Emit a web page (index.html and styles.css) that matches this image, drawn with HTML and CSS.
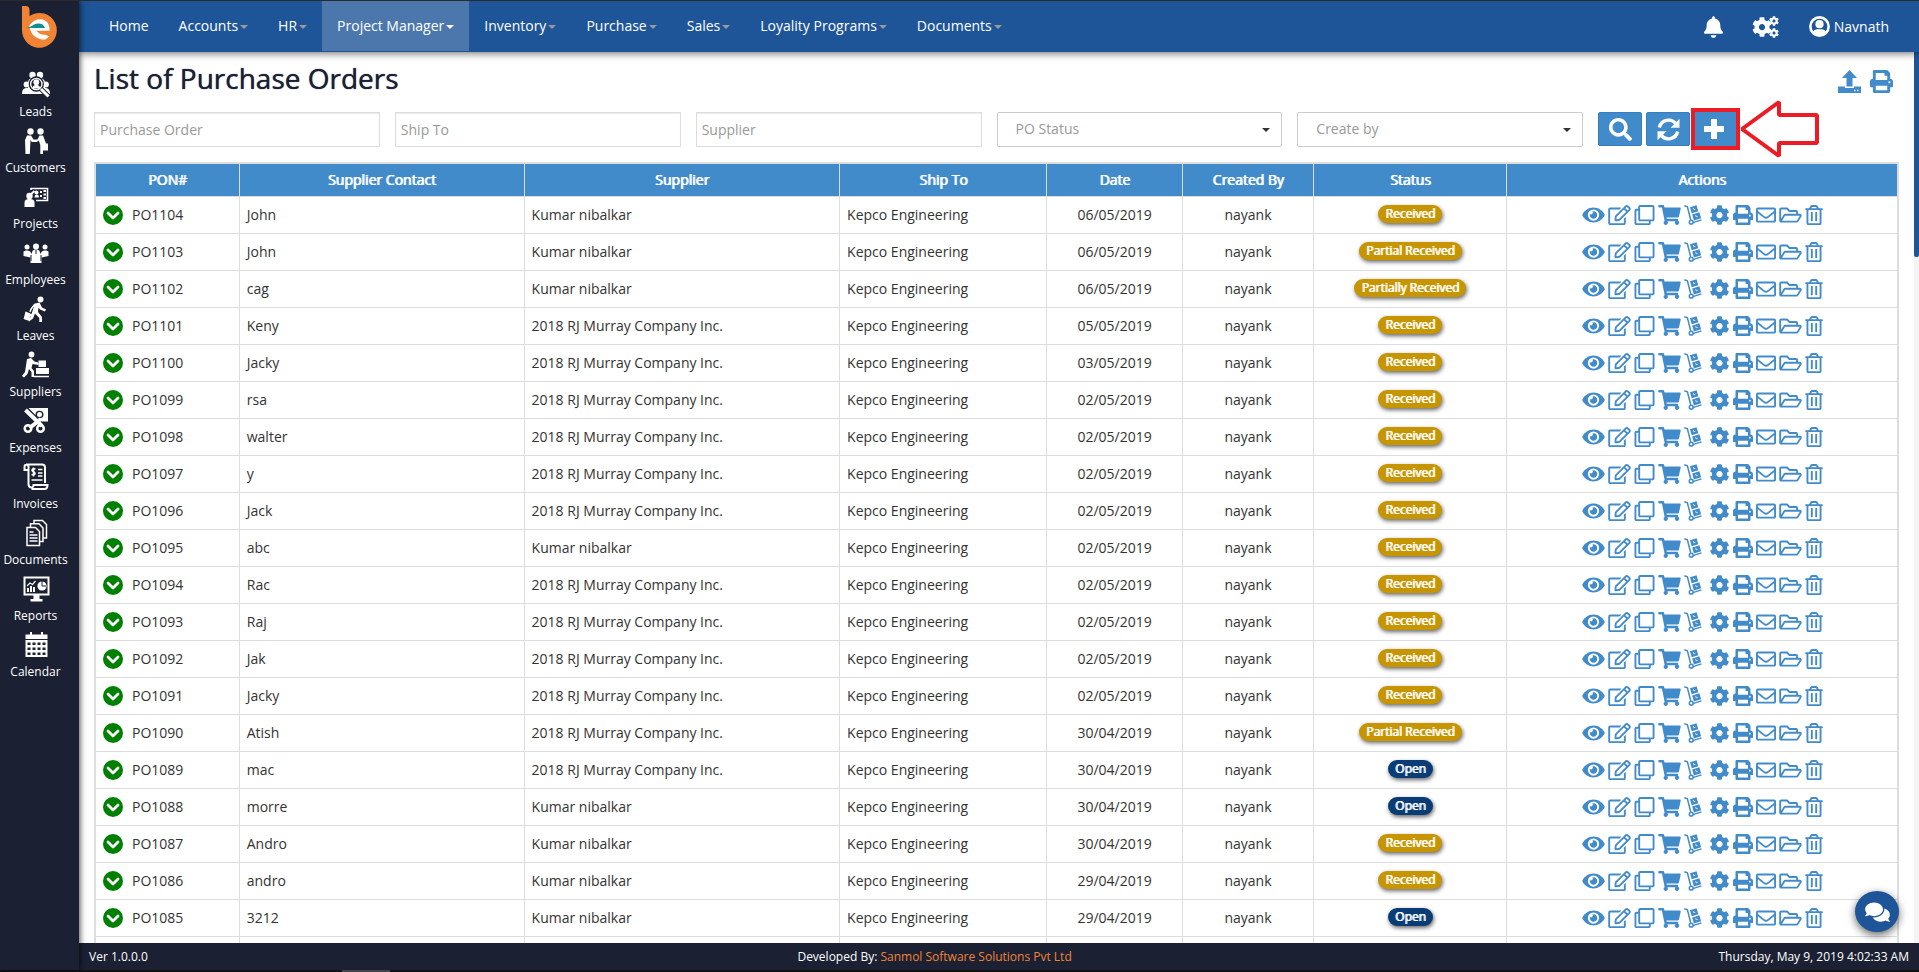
FILE: index.html
```html
<!DOCTYPE html>
<html lang="en">
<head>
<meta charset="utf-8">
<title>List of Purchase Orders</title>
<link rel="stylesheet" href="styles.css">
</head>
<body>
<svg class="sprite" aria-hidden="true">
  <symbol id="eye" viewBox="0 0 576 512"><path d="M572.52 241.4C518.29 135.59 410.93 64 288 64S57.68 135.64 3.48 241.41a32.35 32.35 0 0 0 0 29.19C57.71 376.41 165.07 448 288 448s230.32-71.64 284.52-177.41a32.35 32.35 0 0 0 0-29.19zM288 400a144 144 0 1 1 144-144 143.93 143.93 0 0 1-144 144zm0-240a95.31 95.31 0 0 0-25.31 3.79 47.85 47.85 0 0 1-66.9 66.9A95.78 95.78 0 1 0 288 160z"/></symbol>
  <symbol id="edit" viewBox="0 0 576 512"><path d="M402.3 344.9l32-32c5-5 13.7-1.5 13.7 5.7V464c0 26.5-21.5 48-48 48H48c-26.5 0-48-21.5-48-48V112c0-26.5 21.5-48 48-48h273.5c7.1 0 10.7 8.6 5.7 13.7l-32 32c-1.5 1.5-3.5 2.3-5.7 2.3H48v352h352V350.5c0-2.1.8-4.1 2.3-5.6zm156.6-201.8L296.3 405.7l-90.4 10c-26.2 2.9-48.5-19.2-45.6-45.6l10-90.4L432.9 17.1c22.9-22.9 59.9-22.9 82.7 0l43.2 43.2c22.9 22.9 22.9 60 .1 82.8zM460.1 174L402 115.9 216.2 301.8l-7.3 65.3 65.3-7.3L460.1 174zm64.8-79.7l-43.2-43.2c-4.1-4.1-10.8-4.1-14.8 0L436 82l58.1 58.1 30.9-30.9c4-4.2 4-10.8-.1-14.9z"/></symbol>
  <symbol id="clone" viewBox="0 0 512 512"><path d="M464 0H144c-26.51 0-48 21.49-48 48v48H48c-26.51 0-48 21.49-48 48v320c0 26.51 21.49 48 48 48h320c26.51 0 48-21.49 48-48v-48h48c26.51 0 48-21.49 48-48V48c0-26.51-21.49-48-48-48zM362 464H54a6 6 0 0 1-6-6V150a6 6 0 0 1 6-6h42v224c0 26.51 21.49 48 48 48h224v42a6 6 0 0 1-6 6zm96-96H150a6 6 0 0 1-6-6V54a6 6 0 0 1 6-6h308a6 6 0 0 1 6 6v308a6 6 0 0 1-6 6z"/></symbol>
  <symbol id="cart" viewBox="0 0 576 512"><path d="M528.12 301.319l47.273-208C578.806 78.301 567.391 64 551.99 64H159.208l-9.166-44.81C147.758 8.021 137.93 0 126.529 0H24C10.745 0 0 10.745 0 24v16c0 13.255 10.745 24 24 24h69.883l70.248 343.435C147.325 417.1 136 435.222 136 456c0 30.928 25.072 56 56 56s56-25.072 56-56c0-15.674-6.447-29.835-16.824-40h209.647C430.447 426.165 424 440.326 424 456c0 30.928 25.072 56 56 56s56-25.072 56-56c0-22.172-12.888-41.332-31.579-50.405l5.517-24.276c3.413-15.018-8.002-29.319-23.403-29.319H218.117l-6.545-32h293.145c11.206 0 20.92-7.754 23.403-18.681z"/></symbol>
  <symbol id="dolly" viewBox="0 0 18 20" preserveAspectRatio="xMinYMid"><path d="M.3.8 3.400 1.800l3.300 13M8.800 17.600l8.700-2.700" fill="none" stroke="currentColor" stroke-width="1.500"/><circle cx="7.200" cy="17.200" r="1.900" fill="none" stroke="currentColor" stroke-width="1.500"/><path d="M6 2.200 12.600.200l1.700 6-6.600 2zM8.200 9.400l7.200-2.200 1.700 6-7.200 2.200z"/><path d="m9.300 3 .5 1.800 1.600-.5M11.600 10l.5 1.800 1.700-.5" fill="none" stroke="#fff" stroke-width=".7"/></symbol>
  <symbol id="cog" viewBox="0 0 512 512"><path d="M487.4 315.7l-42.6-24.6c4.3-23.2 4.3-47 0-70.2l42.6-24.6c4.9-2.8 7.1-8.6 5.5-14-11.1-35.6-30-67.8-54.7-94.6-3.8-4.1-10-5.1-14.8-2.3L380.8 110c-17.9-15.4-38.5-27.3-60.8-35.1V25.8c0-5.6-3.9-10.5-9.4-11.7-36.7-8.2-74.3-7.8-109.2 0-5.5 1.2-9.4 6.1-9.4 11.7V75c-22.2 7.9-42.8 19.8-60.8 35.1L88.7 85.5c-4.9-2.8-11-1.9-14.8 2.3-24.700 26.700-43.600 58.900-54.700 94.600-1.700 5.400.600 11.200 5.500 14L67.300 221c-4.300 23.200-4.300 47 0 70.200l-42.600 24.600c-4.900 2.800-7.100 8.600-5.500 14 11.100 35.600 30 67.800 54.700 94.600 3.800 4.100 10 5.100 14.800 2.300l42.600-24.600c17.900 15.400 38.500 27.300 60.800 35.100v49.200c0 5.600 3.900 10.500 9.400 11.700 36.700 8.200 74.300 7.800 109.200 0 5.500-1.200 9.400-6.100 9.400-11.700v-49.200c22.200-7.900 42.800-19.800 60.800-35.100l42.600 24.600c4.900 2.800 11 1.900 14.800-2.300 24.700-26.700 43.600-58.900 54.700-94.600 1.500-5.500-.7-11.300-5.600-14.100zM256 336c-44.100 0-80-35.900-80-80s35.900-80 80-80 80 35.900 80 80-35.900 80-80 80z"/></symbol>
  <symbol id="print" viewBox="0 0 512 512"><path d="M448 192V77.250c0-8.490-3.370-16.620-9.370-22.630L393.370 9.370c-6-6-14.140-9.370-22.630-9.370H96C78.330 0 64 14.330 64 32v160c-35.350 0-64 28.650-64 64v112c0 8.840 7.160 16 16 16h48v96c0 17.670 14.330 32 32 32h320c17.670 0 32-14.330 32-32v-96h48c8.840 0 16-7.160 16-16V256c0-35.350-28.650-64-64-64zm-64 256H128v-96h256v96zm0-224H128V64h192v48c0 8.840 7.160 16 16 16h48v96zm48 72c-13.250 0-24-10.750-24-24 0-13.260 10.750-24 24-24s24 10.740 24 24c0 13.250-10.750 24-24 24z"/></symbol>
  <symbol id="mail" viewBox="0 0 512 512"><path d="M464 64H48C21.490 64 0 85.490 0 112v288c0 26.510 21.490 48 48 48h416c26.510 0 48-21.490 48-48V112c0-26.510-21.490-48-48-48zm0 48v40.805c-22.422 18.259-58.168 46.651-134.587 106.490-16.841 13.247-50.201 45.072-73.413 44.701-23.208.375-56.579-31.459-73.413-44.701C106.180 199.465 70.425 171.067 48 152.805V112h416zM48 400V214.398c22.914 18.251 55.409 43.862 104.938 82.646 21.857 17.205 60.134 55.186 103.062 54.955 42.717.231 80.509-37.199 103.053-54.947 49.528-38.783 82.032-64.401 104.947-82.653V400H48z"/></symbol>
  <symbol id="folder" viewBox="0 0 576 512"><path d="M527.9 224H480v-48c0-26.5-21.5-48-48-48H272l-64-64H48C21.5 64 0 85.500 0 112v288c0 26.500 21.500 48 48 48h400c16.500 0 31.900-8.500 40.700-22.600l79.900-128c20-31.900-3-73.400-40.700-73.400zM48 118c0-3.300 2.700-6 6-6h134.100l64 64H426c3.300 0 6 2.700 6 6v42H152c-16.800 0-32.400 8.800-41.100 23.200L48 351.400zm400 282H72l77.200-128H528z"/></symbol>
  <symbol id="trash" viewBox="0 0 448 512"><path d="M268 416h24a12 12 0 0 0 12-12V188a12 12 0 0 0-12-12h-24a12 12 0 0 0-12 12v216a12 12 0 0 0 12 12zM432 80h-82.410l-34-56.700A48 48 0 0 0 274.410 0H173.590a48 48 0 0 0-41.160 23.300L98.410 80H16A16 16 0 0 0 0 96v16a16 16 0 0 0 16 16h16v336a48 48 0 0 0 48 48h288a48 48 0 0 0 48-48V128h16a16 16 0 0 0 16-16V96a16 16 0 0 0-16-16zM171.840 50.910A6 6 0 0 1 177 48h94a6 6 0 0 1 5.150 2.910L293.610 80H154.390zM368 464H80V128h288zm-212-48h24a12 12 0 0 0 12-12V188a12 12 0 0 0-12-12h-24a12 12 0 0 0-12 12v216a12 12 0 0 0 12 12z"/></symbol>
  <symbol id="down" viewBox="0 0 20 20"><circle cx="10" cy="10" r="10"/><path d="m5 8 5 5 5-5" fill="none" stroke="#fff" stroke-width="2.800" stroke-linecap="round" stroke-linejoin="round"/></symbol>
</svg>

<div class="app">
  <aside class="sidebar">
    <a class="logo" href="#" aria-label="Home">
      <svg viewBox="0 0 36 42" width="36" height="42"><path d="M0 0h3.500A4 4 0 0 1 7.500 4v6A17.400 17.400 0 1 1 0 24z" fill="#f18335"/><path d="M7 20.500C9.500 16 13 13.300 18.500 13.300c6 0 9.500 5 9 11.400h-13c2.500 3.300 5.500 4.500 9 4l3.500 1.800-3.500 3C17 34 10 30 8.700 24.700z" fill="#fff"/><path d="M4.300 22C8 21.200 9.500 20.200 12 18.500c4-2 9.500-1.500 11 3.500z" fill="#0f8f8f"/></svg>
    </a>
    <nav class="side-nav" aria-label="Modules">
      <a href="#"><svg viewBox="0 0 28 28"><circle cx="10.500" cy="4" r="3.200"/><circle cx="18" cy="4" r="3.200"/><path d="M6 12c0-4 2-5 8-5s9 1 9 5v6H6z"/><circle cx="4.500" cy="13.500" r="2.900"/><circle cx="24" cy="13.500" r="2.900"/><path d="M0 23c0-4 1.500-6 5-6h18c3.500 0 5 2 5 6z"/><circle cx="14.300" cy="13" r="7" fill="#fff" stroke="#1b2133" stroke-width="1.300"/><circle cx="14.300" cy="13" r="5" fill="#1b2133"/><circle cx="14.300" cy="11.200" r="2.900"/><path d="M10.500 17.500c0-5 7.600-5 7.600 0z"/><path d="m19 18 7.500 7.500" stroke="#1b2133" stroke-width="5"/><path d="m19 18 7.500 7.500" stroke="#fff" stroke-width="3"/></svg>Leads</a>
      <a href="#"><svg viewBox="0 0 28 28"><circle cx="8.500" cy="4.500" r="3.200"/><circle cx="18.500" cy="4.500" r="3.200"/><path d="M5 8.500h4l2.500 4h4l2-4h3.500l3 8h2v7h-5v3.500h-2.700V18l-1.500-4.500-2 1.500h-5L8.500 13l-.7 14H3.500L3 13z"/></svg>Customers</a>
      <a href="#"><svg viewBox="0 0 28 28"><path d="M9 7V5.500h16.500v12H14" fill="none" stroke="#fff" stroke-width="1.600"/><circle cx="7.500" cy="13" r="3.200"/><path d="M2.500 24v-4c0-3 1.500-4 5-4s5 1 5 4v4z"/><path d="m8 12 4.500-4" stroke="#fff" stroke-width="2"/><circle cx="14.500" cy="9.500" r="2"/><path d="M12.500 14.500c0-4 4.500-4 4.500 0z"/><path d="M18 8h2v2h-2zm3.500-1H24v2h-2.500zm0 3.500H24v2h-2.500zM18 12h2v2h-2zm3.500 2H24v2h-2.500z"/></svg>Projects</a>
      <a href="#"><svg viewBox="0 -2 28 28"><circle cx="5" cy="6" r="2.500"/><circle cx="14" cy="5.500" r="3"/><circle cx="23" cy="6" r="2.500"/><path d="M1.500 15V11c0-2 6-2 7 0l1 2 1-3c1-2 6-2 7 0l1 3 1-2c1-2 7-2 7 0v4l-7 1.500V22H8.500v-5.500z"/><path d="M9 14v6m10-6v6M14 9v4" stroke="#1b2133"/></svg>Employees</a>
      <a href="#"><svg viewBox="0 0 28 28"><circle cx="18.500" cy="4.500" r="3"/><path d="m13 8.500 4.500-1 2.500 5 4 2-1 2-5-2-1.500-2-.5 4.500 4 5v5h-2.700v-4L13 18.500l-2 5-4 3-1.500-2 3-2.500z"/><path d="m13 9-4 5-1 3M4 17.500l5 2-3.500 5-3-1z" stroke="#fff" stroke-width="1.500" fill="#fff"/></svg>Leaves</a>
      <a href="#"><svg viewBox="0 0 28 28"><circle cx="9.500" cy="3.500" r="2.900"/><path d="m5 8 4-1 3.500 3.500 4 1v2.500l-6-1-1 4 2.500 3v6H9.500v-5L7 18l-1.500 5-3.500 3.500-2-1.500 3-4z"/><path d="M16.500 9.500H24V16h-7.500zM14 17h13v6H14z"/><path d="M12 25.500h15" stroke="#fff" stroke-width="1.500"/></svg>Suppliers</a>
      <a href="#"><svg viewBox="0 0 28 28"><path d="M6 1h20v13.500H12z"/><ellipse cx="17.500" cy="7.500" rx="4" ry="3.800" fill="#1b2133"/><circle cx="17.500" cy="7.500" r="2.500"/><path d="M3.500 2.500 20 19.500" stroke="#1b2133" stroke-width="6.500"/><path d="M3.500 3 20 19M19 12 7.500 21" stroke="#fff" stroke-width="4"/><circle cx="6" cy="21.500" r="3.300" fill="none" stroke="#fff" stroke-width="2.500"/><circle cx="18.500" cy="21.500" r="3.300" fill="none" stroke="#fff" stroke-width="2.500"/></svg>Expenses</a>
      <a href="#"><svg viewBox="0 0 28 28"><path d="M6.500 7H2.500V4c0-3 4-3 4 0v17c0 4 5 5 5 1h14c0 3-1 4-3 4H9.500M4 1.500h16c2 0 3 1 3 3V20" fill="none" stroke="#fff" stroke-width="2"/><path d="M16 6.500h4.500M16 10h4.500M16 13h4.500M9.500 17h11M13.500 6c-4-1-4.500 2-2 2.800s2 4-2 2.700M11.500 4.500v9" fill="none" stroke="#fff" stroke-width="1.500"/></svg>Invoices</a>
      <a href="#"><svg viewBox="0 0 28 28"><g fill="none" stroke="#fff" stroke-width="1.500"><path d="M5 8.500h8.500l4 4V26.500H5zM8.500 8V4.800H17l4 4.200v13.500h-3M12 4.500V1.500h8.500l4 4V19h-3"/><path d="M7.500 13h4M7.500 16h8M7.500 19h8M7.500 22h8"/></g></svg>Documents</a>
      <a href="#"><svg viewBox="0 0 28 28"><path d="M2.500 2.500h24v17h-24z" fill="none" stroke="#fff" stroke-width="2"/><circle cx="20" cy="11" r="4.600"/><path d="M20 6v5h4" stroke="#1b2133" fill="none"/><path d="M5 13h2v4H5zm3-2h2v6H8zm3 1h2v5h-2zM11.500 20h6v4h3v2.500h-12V24h3z"/><path d="m5 11 3-3 2.500 1.500 3-3.500" fill="none" stroke="#fff" stroke-width="1.200"/></svg>Reports</a>
      <a href="#"><svg viewBox="0 0 28 28"><path d="M3.500 3.500h22v4.500h-22zM8 1h2v4H8zM19 1h2v4h-2z"/><path d="M3.500 9h22V26h-22z"/><path d="M5.500 11.500h3v2.500h-3zm5 0h3v2.500h-3zm5 0h3v2.500h-3zm5 0h3v2.500h-3zM5.500 16.500h3V19h-3zm5 0h3V19h-3zm5 0h3V19h-3zm5 0h3V19h-3zM5.500 21.500h3V24h-3zm5 0h3V24h-3zm5 0h3V24h-3zm5 0h3V24h-3z" fill="#1b2133"/></svg>Calendar</a>
    </nav>
  </aside>

  <div class="page">
    <header class="topbar">
      <nav class="menu" aria-label="Main">
        <a href="#">Home</a>
        <a href="#">Accounts<i class="caret"></i></a>
        <a href="#">HR<i class="caret"></i></a>
        <a href="#" class="active">Project Manager<i class="caret"></i></a>
        <a href="#">Inventory<i class="caret"></i></a>
        <a href="#">Purchase<i class="caret"></i></a>
        <a href="#">Sales<i class="caret"></i></a>
        <a href="#">Loyality Programs<i class="caret"></i></a>
        <a href="#">Documents<i class="caret"></i></a>
      </nav>
      <div class="account">
        <button type="button" aria-label="Notifications"><svg viewBox="0 0 448 512" width="19" height="22"><path d="M224 512c35.320 0 63.970-28.650 63.970-64H160.030c0 35.350 28.650 64 63.970 64zm215.390-149.710c-19.320-20.760-55.470-51.990-55.470-154.290 0-77.700-54.480-139.900-127.940-155.160V32c0-17.670-14.320-32-31.980-32s-31.980 14.330-31.980 32v20.840C118.560 68.100 64.080 130.300 64.080 208c0 102.300-36.150 133.530-55.470 154.290-6 6.450-8.660 14.160-8.610 21.710.11 16.400 12.980 32 32.100 32h383.800c19.120 0 32-15.600 32.100-32 .05-7.550-2.610-15.270-8.610-21.710z"/></svg></button>
        <button type="button" aria-label="Settings"><svg viewBox="0 0 28 22" width="28" height="22"><svg x="0" y="1" width="20" height="20"><use href="#cog"/></svg><svg x="17" y="0" width="10" height="10"><use href="#cog"/></svg><svg x="17" y="12" width="10" height="10"><use href="#cog"/></svg></svg></button>
        <button type="button" class="user"><svg viewBox="0 0 20 20" width="21" height="21"><circle cx="10" cy="10" r="8.700" fill="none" stroke="#fff" stroke-width="2.500"/><circle cx="10" cy="7.800" r="3.900"/><path d="M3.500 15.500c1-2.500 3-3 6.500-3s5.500.5 6.500 3c-3 4.500-10 4.500-13 0z"/></svg>Navnath</button>
      </div>
    </header>

    <div class="body">
      <main class="content">
        <div class="heading">
          <h1>List of Purchase Orders</h1>
          <div class="tools">
            <button type="button" aria-label="Export"><svg viewBox="0 0 23 23" width="23" height="23"><path d="M11.500 0 19 8h-4.500v8.500h-6V8H4z"/><path d="M0 16.500h7V18h9v-1.500h7V23H0z"/><path d="M16 20.500h1.500m1.500 0h1.500" stroke="#fff" stroke-width="1.500"/></svg></button>
            <button type="button" aria-label="Print"><svg width="23" height="23"><use href="#print"/></svg></button>
          </div>
        </div>

        <form class="filters">
          <div class="field"><input type="text" placeholder="Purchase Order" aria-label="Purchase Order"></div>
          <div class="field"><input type="text" placeholder="Ship To" aria-label="Ship To"></div>
          <div class="field"><input type="text" placeholder="Supplier" aria-label="Supplier"></div>
          <div class="field select"><select aria-label="PO Status"><option>PO Status</option></select></div>
          <div class="field select"><select aria-label="Create by"><option>Create by</option></select></div>
          <div class="buttons">
            <button type="button" aria-label="Search"><svg viewBox="0 0 512 512" width="23" height="23"><path d="M505 442.700L405.300 343c-4.500-4.500-10.600-7-17-7H372c27.600-35.300 44-79.700 44-128C416 93.100 322.900 0 208 0S0 93.100 0 208s93.100 208 208 208c48.300 0 92.700-16.400 128-44v16.300c0 6.400 2.500 12.500 7 17l99.700 99.700c9.400 9.400 24.600 9.400 33.900 0l28.300-28.300c9.400-9.400 9.400-24.600.1-34zM208 336c-70.700 0-128-57.200-128-128 0-70.700 57.200-128 128-128 70.700 0 128 57.200 128 128 0 70.700-57.200 128-128 128z"/></svg></button>
            <button type="button" aria-label="Refresh"><svg viewBox="0 0 23 23" width="23" height="23"><path d="M2.300 9.500A9.400 9.400 0 0 1 19 6M20.700 13.500A9.400 9.400 0 0 1 4 17" fill="none" stroke="#fff" stroke-width="3.400"/><path d="M22.500.8v9H13.500zM.5 22.200v-9h9z"/></svg></button>
            <button type="button" class="add" aria-label="Add purchase order"><svg viewBox="0 0 20 20" width="20" height="20"><path d="M7 0h6v7h7v6h-7v7H7v-7H0V7h7z"/></svg>
              <svg class="pointer" viewBox="0 0 80 58" width="80" height="58"><path d="M2 29 39 2v13h38v28H39v13z" fill="#fff" stroke="#ed1c24" stroke-width="4" stroke-linejoin="bevel"/></svg></button>
          </div>
        </form>

        <table class="orders">
          <colgroup><col class="c-po"><col class="c-contact"><col class="c-supplier"><col class="c-ship"><col class="c-date"><col class="c-by"><col class="c-status"><col class="c-actions"></colgroup>
          <thead><tr><th>PON#</th><th>Supplier Contact</th><th>Supplier</th><th>Ship To</th><th>Date</th><th>Created By</th><th>Status</th><th>Actions</th></tr></thead>
          <tbody id="rows"></tbody>
        </table>
      </main>
      <div class="track"><div class="thumb"></div></div>
    </div>

    <footer class="footer">
      <span>Ver 1.0.0.0</span>
      <span>Developed By: <a href="#">Sanmol Software Solutions Pvt Ltd</a></span>
      <span class="clock">Thursday, May 9, 2019 4:02:33 AM</span>
    </footer>
    <button type="button" class="chat" aria-label="Chat"><svg viewBox="0 0 576 512" width="25" height="22"><path d="M416 192c0-88.400-93.100-160-208-160S0 103.600 0 192c0 34.300 14.100 65.900 38 92-13.400 30.200-35.500 54.200-35.800 54.500-2.200 2.300-2.800 5.700-1.500 8.700S4.800 352 8 352c36.600 0 66.900-12.300 88.700-25 32.200 15.700 70.300 25 111.300 25 114.900 0 208-71.600 208-160zm122 220c23.900-26 38-57.700 38-92 0-66.900-53.500-124.200-129.300-148.100.9 6.600 1.300 13.300 1.300 20.100 0 105.900-107.700 192-240 192-10.800 0-21.300-.8-31.700-1.900C207.800 439.600 281.800 480 368 480c41 0 79.100-9.200 111.300-25 21.800 12.700 52.100 25 88.700 25 3.200 0 6.100-1.900 7.300-4.800 1.300-2.900.7-6.300-1.500-8.700-.3-.3-22.400-24.200-35.800-54.500z"/></svg></button>
  </div>
</div>
<div class="strip"><div class="strip-thumb"></div></div>
<script src="script.js"></script>
</body>
</html>
```

FILE: styles.css
```css
* { box-sizing: border-box; }

body {
  margin: 0;
  height: 100vh;
  display: flex;
  flex-direction: column;
  overflow: hidden;
  border-top: 1px solid #2a2a2a;
  background: #fff;
  color: #333;
  font: 14px/20px "Open Sans", "Noto Sans", sans-serif;
}

a { color: inherit; text-decoration: none; }
button { font: inherit; color: inherit; border: 0; background: none; padding: 0; cursor: pointer; }
svg { fill: currentColor; display: block; }
.sprite { display: none; }

.app { flex: 1; min-height: 0; display: flex; }

/* Sidebar */
.sidebar {
  width: 79px;
  flex: none;
  padding: 5px 8px 0 0;
  background: #1b2133;
  color: #fff;
  box-shadow: 1px 0 6px rgba(0, 0, 0, .7);
  z-index: 2;
}
.logo { display: block; padding-left: 22px; height: 65px; }
.side-nav { display: flex; flex-direction: column; gap: 6px; }
.side-nav a {
  display: flex;
  flex-direction: column;
  align-items: center;
  gap: 4px;
  font-size: 12px;
  line-height: 18px;
}
.side-nav svg { width: 28px; height: 28px; }

/* Top bar */
.page { flex: 1; min-width: 0; display: flex; flex-direction: column; position: relative; }
.topbar {
  height: 51px;
  flex: none;
  display: flex;
  justify-content: space-between;
  padding: 0 30px 0 15px;
  background: #1e5598;
  color: #fff;
  box-shadow: 0 1px 8px rgba(0, 0, 0, .6);
  z-index: 1;
}
.menu { display: flex; }
.menu a { display: flex; align-items: center; height: 50px; padding: 0 15px; white-space: nowrap; }
.menu .active { background: #4b77ad; }
.caret {
  margin: 2px 0 0 2px;
  border: 4px solid transparent;
  border-top-color: #999;
  border-bottom: 0;
}
.active .caret { border-top-color: #fff; }
.account { display: flex; align-items: center; gap: 29px; }
.user { display: flex; align-items: center; gap: 4px; }

/* Content */
.body { flex: 1; min-height: 0; display: flex; }
.content { flex: 1; min-width: 0; overflow: hidden; padding: 10px 15px 0; }
.track { width: 5px; background: #f5f5f5; }
.thumb { height: 23%; background: #1e5598; border-radius: 0 0 2px 2px; }

.heading { display: flex; justify-content: space-between; align-items: flex-start; height: 50px; padding-right: 6px; }
h1 {
  margin: 0;
  font-size: 28px;
  line-height: 32px;
  font-weight: 400;
  color: #1b2133;
  text-shadow: 0 0 1px #1b2133;
}
.tools { display: flex; gap: 9px; color: #428bca; padding-top: 8px; }

.filters { display: grid; grid-template-columns: repeat(6, 1fr); margin-bottom: 15px; }
.field { padding-right: 15px; position: relative; }
.field input, .field select {
  display: block;
  width: 100%;
  height: 35px;
  border: 1px solid #ddd;
  border-radius: 0;
  background: #fff;
  color: #999;
  font: inherit;
  padding: 0 5px;
}
.field input { box-shadow: inset 0 1px 1px rgba(0, 0, 0, .08); }
.field input::placeholder { color: #999; opacity: 1; }
.field select { appearance: none; border-color: #ccc; border-radius: 2px; padding: 0 18px 2px; }
.select::after {
  content: "";
  position: absolute;
  right: 27px;
  top: 16px;
  border: 4px solid transparent;
  border-top-color: #333;
  border-bottom: 0;
}
.buttons { display: flex; gap: 4px; }
.buttons button {
  display: grid;
  place-items: center;
  width: 44px;
  height: 34px;
  background: #428bca;
  border: 1px solid #357ebd;
  border-radius: 2px;
  color: #fff;
}
.buttons .add {
  position: relative;
  border: 0;
  border-radius: 0;
  outline: 4px solid #ed1c24;
  width: 41px;
  margin-left: 1px;
  padding-right: 3px;
}
.pointer { position: absolute; left: 45px; top: -12px; }

.orders {
  width: 100%;
  table-layout: fixed;
  border-collapse: collapse;
  border: 2px solid #ddd;
}
.orders th, .orders td { border: 1px solid #ddd; height: 37px; padding: 0 6px 0 7px; }
.orders th {
  height: 33px;
  padding: 0 6px;
  background: #428bca;
  color: #fff;
  font-weight: 400;
  text-shadow: 1px 0 0 #fff;
}
.c-po { width: 8%; }
.c-contact { width: 15.800%; }
.c-supplier { width: 17.500%; }
.c-ship { width: 11.500%; }
.c-date { width: 7.500%; }
.c-by { width: 7.300%; }
.c-status { width: 10.700%; }
.orders .center { text-align: center; padding: 0 6px; }
.po { display: flex; align-items: center; gap: 9px; }
.po button { color: green; }
.actions { display: flex; justify-content: center; gap: 3px; color: #428bca; }
.badge {
  display: inline-block;
  vertical-align: top;
  padding: 0 7px;
  border-radius: 9px;
  background: #c69500;
  color: #fff;
  font-size: 12px;
  line-height: 18px;
  text-shadow: 1px 0 0 #fff;
  box-shadow: 1px 2px 4px rgba(0, 0, 0, .6);
}
.badge.open { background: #0a3d75; }

/* Footer */
.footer {
  height: 27px;
  flex: none;
  display: grid;
  grid-template-columns: 11fr auto 13fr;
  align-items: center;
  padding: 0 10px;
  background: #1b2133;
  color: #fff;
  font-size: 12px;
}
.footer a { color: #f18335; }
.clock { text-align: right; }
.chat {
  position: absolute;
  right: 20px;
  bottom: 38px;
  width: 44px;
  height: 41px;
  display: grid;
  place-items: center;
  border-radius: 50%;
  background: #1e5598;
  color: #fff;
  box-shadow: 0 3px 8px rgba(0, 0, 0, .6);
}
.strip { height: 2px; background: #141414; padding-left: 342px; }
.strip-thumb { width: 48px; height: 2px; background: #444; }
```

FILE: script.js
```javascript
const K = "Kumar nibalkar";
const R = "2018 RJ Murray Company Inc.";
const orders = [
  ["PO1104", "John", K, "06/05/2019", "Received"],
  ["PO1103", "John", K, "06/05/2019", "Partial Received"],
  ["PO1102", "cag", K, "06/05/2019", "Partially Received"],
  ["PO1101", "Keny", R, "05/05/2019", "Received"],
  ["PO1100", "Jacky", R, "03/05/2019", "Received"],
  ["PO1099", "rsa", R, "02/05/2019", "Received"],
  ["PO1098", "walter", R, "02/05/2019", "Received"],
  ["PO1097", "y", R, "02/05/2019", "Received"],
  ["PO1096", "Jack", R, "02/05/2019", "Received"],
  ["PO1095", "abc", K, "02/05/2019", "Received"],
  ["PO1094", "Rac", R, "02/05/2019", "Received"],
  ["PO1093", "Raj", R, "02/05/2019", "Received"],
  ["PO1092", "Jak", R, "02/05/2019", "Received"],
  ["PO1091", "Jacky", R, "02/05/2019", "Received"],
  ["PO1090", "Atish", R, "30/04/2019", "Partial Received"],
  ["PO1089", "mac", R, "30/04/2019", "Open"],
  ["PO1088", "morre", K, "30/04/2019", "Open"],
  ["PO1087", "Andro", K, "30/04/2019", "Received"],
  ["PO1086", "andro", K, "29/04/2019", "Received"],
  ["PO1085", "3212", K, "29/04/2019", "Open"],
  ["", "", "", "", ""]
];
const actions = [
  ["eye", "View", 23], ["edit", "Edit", 23], ["clone", "Copy", 21], ["cart", "Order", 23],
  ["dolly", "Receive", 22], ["cog", "Settings", 21], ["print", "Print", 20], ["mail", "Email", 20],
  ["folder", "Files", 23], ["trash", "Delete", 18]
];
const icon = (id, label, w, h) =>
  `<button type="button" aria-label="${label}"><svg width="${w}" height="${h}"><use href="#${id}"/></svg></button>`;

document.getElementById("rows").innerHTML = orders.map(([po, contact, supplier, date, status]) => po ? `<tr>
  <td><div class="po">${icon("down", "Expand", 20, 20)}<span>${po}</span></div></td>
  <td>${contact}</td><td>${supplier}</td><td>Kepco Engineering</td>
  <td class="center">${date}</td><td class="center">nayank</td>
  <td class="center"><span class="badge ${status === "Open" ? "open" : ""}">${status}</span></td>
  <td class="center"><div class="actions">${actions.map(([id, label, w]) => icon(id, label, w, 20)).join("")}</div></td>
</tr>` : `<tr>${"<td></td>".repeat(8)}</tr>`).join("");
```
